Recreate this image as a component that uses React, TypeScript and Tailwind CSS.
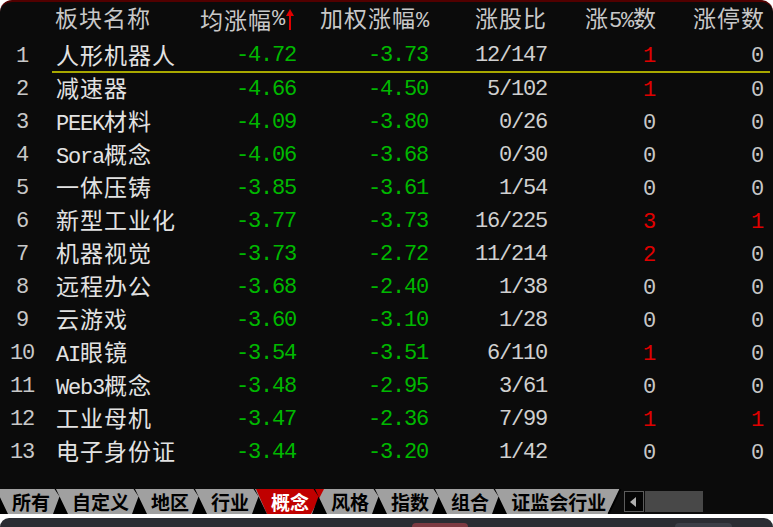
import React from "react";

type Row = {
  idx: number;
  name: string;
  avg: string;
  weighted: string;
  ratio: string;
  up5: number;
  limit: number;
};

const rows: Row[] = [
  { idx: 1, name: "人形机器人", avg: "-4.72", weighted: "-3.73", ratio: "12/147", up5: 1, limit: 0 },
  { idx: 2, name: "减速器", avg: "-4.66", weighted: "-4.50", ratio: "5/102", up5: 1, limit: 0 },
  { idx: 3, name: "PEEK材料", avg: "-4.09", weighted: "-3.80", ratio: "0/26", up5: 0, limit: 0 },
  { idx: 4, name: "Sora概念", avg: "-4.06", weighted: "-3.68", ratio: "0/30", up5: 0, limit: 0 },
  { idx: 5, name: "一体压铸", avg: "-3.85", weighted: "-3.61", ratio: "1/54", up5: 0, limit: 0 },
  { idx: 6, name: "新型工业化", avg: "-3.77", weighted: "-3.73", ratio: "16/225", up5: 3, limit: 1 },
  { idx: 7, name: "机器视觉", avg: "-3.73", weighted: "-2.72", ratio: "11/214", up5: 2, limit: 0 },
  { idx: 8, name: "远程办公", avg: "-3.68", weighted: "-2.40", ratio: "1/38", up5: 0, limit: 0 },
  { idx: 9, name: "云游戏", avg: "-3.60", weighted: "-3.10", ratio: "1/28", up5: 0, limit: 0 },
  { idx: 10, name: "AI眼镜", avg: "-3.54", weighted: "-3.51", ratio: "6/110", up5: 1, limit: 0 },
  { idx: 11, name: "Web3概念", avg: "-3.48", weighted: "-2.95", ratio: "3/61", up5: 0, limit: 0 },
  { idx: 12, name: "工业母机", avg: "-3.47", weighted: "-2.36", ratio: "7/99", up5: 1, limit: 1 },
  { idx: 13, name: "电子身份证", avg: "-3.44", weighted: "-3.20", ratio: "1/42", up5: 0, limit: 0 },
];

const tabs = ["所有", "自定义", "地区", "行业", "概念", "风格", "指数", "组合", "证监会行业"];

const cjk = "font-['Noto_Sans_CJK_SC',sans-serif] text-[23px] tracking-[1px] leading-none";
const mono = "font-['Liberation_Mono',monospace] text-[22px] tracking-[-1.2px] leading-none";

// half-width latin in 12px cells, CJK in 24px cells
const Mixed = ({ text }: { text: string }) => {
  const parts = text.match(/[\x00-\x7F]+|[^\x00-\x7F]+/g) ?? [];
  return (
    <>
      {parts.map((p, i) => (
        <span key={i} className={/^[\x00-\x7F]/.test(p) ? mono : cjk}>
          {p}
        </span>
      ))}
    </>
  );
};

const Sep = ({ first }: { first?: boolean }) => (
  <svg width="22" height="25" viewBox="0 0 22 25" className={first ? "ml-[-10px] shrink-0" : "shrink-0"}>
    <polygon points="4.5,0 6,0 18,25 3,25 9.5,7.5" fill="#000" />
  </svg>
);

const Count = ({ n }: { n: number }) => (
  <span className={`${mono} ${n > 0 ? "text-[#e00000]" : "text-[#c8c8c8]"}`}>{n}</span>
);

export default function App() {
  return (
    <div className="w-[773px] h-[527px] bg-white overflow-hidden select-none">
      <div className="h-[514px] rounded-t-[12px] bg-[#0b0b0b] border-t-2 border-[#520000] flex flex-col">
        {/* header */}
        <div className="flex h-[38px] items-center pb-[3px] text-[#c8c8c8]">
          <div className="w-[44px]" />
          <div className="ml-[8px] flex flex-1 mr-[3px] items-center">
            <div className="w-[148px] pl-[3px]">
              <Mixed text="板块名称" />
            </div>
            <div className="w-[96px] flex justify-end items-center">
              <Mixed text="均涨幅%" />
              <svg width="12" height="21" viewBox="0 0 12 21">
                <polygon points="2,7 6,0 10,7" fill="#e00000" />
                <rect x="5" y="6" width="2" height="15" fill="#e00000" />
              </svg>
            </div>
            <div className="w-[132px] text-right">
              <Mixed text="加权涨幅%" />
            </div>
            <div className="w-[119px] text-right">
              <Mixed text="涨股比" />
            </div>
            <div className="w-[110px] text-right">
              <Mixed text="涨5%数" />
            </div>
            <div className="w-[108px] text-right">
              <Mixed text="涨停数" />
            </div>
          </div>
        </div>

        {/* rows */}
        {rows.map((r) => (
          <div key={r.idx} className="flex h-[33px] items-center">
            <div className={`w-[44px] text-center text-[#c8c8c8] ${mono}`}>{r.idx}</div>
            <div
              className={`ml-[8px] mr-[3px] flex flex-1 h-full items-center box-border ${
                r.idx === 1 ? "border-b-2 border-[#a8a800] pt-[1px]" : ""
              }`}
            >
              <div className="w-[148px] pl-[4px] text-[#e2e2e2] whitespace-nowrap">
                <Mixed text={r.name} />
              </div>
              <div className={`w-[96px] text-right text-[#00b800] ${mono}`}>{r.avg}</div>
              <div className={`w-[132px] text-right text-[#00b800] ${mono}`}>{r.weighted}</div>
              <div className={`w-[119px] text-right text-[#d0d0d0] ${mono}`}>{r.ratio}</div>
              <div className="w-[110px] text-right pr-[2px]">
                <Count n={r.up5} />
              </div>
              <div className="w-[108px] text-right pr-[2px]">
                <Count n={r.limit} />
              </div>
            </div>
          </div>
        ))}

        {/* sheet tabs */}
        <div className="mt-auto flex h-[25px] items-stretch">
          <div className="relative isolate flex items-center bg-[#a0a0a0] overflow-hidden">
            {tabs.map((t, i) => {
              const active = t === "概念";
              return (
                <React.Fragment key={t}>
                  <Sep first={i === 0} />
                  <span
                    className={`relative font-['Noto_Sans_CJK_SC',sans-serif] font-bold text-[19px] leading-none ${
                      active ? "text-white" : "text-black"
                    }`}
                  >
                    {active && (
                      <svg
                        width="68"
                        height="25"
                        viewBox="0 0 68 25"
                        className="absolute left-[-15px] top-[-3px] -z-10"
                      >
                        <polygon points="0,0 68,0 55,25 11,25" fill="#c00000" />
                      </svg>
                    )}
                    {t}
                  </span>
                </React.Fragment>
              );
            })}
          </div>
          <svg width="16" height="25" viewBox="0 0 16 25" className="shrink-0">
            <polygon points="0,0 14,0 2,25 0,25" fill="#a0a0a0" />
            <line x1="14.5" y1="0" x2="2.5" y2="25" stroke="#000" strokeWidth="2" />
          </svg>
          <div className="ml-[2px] self-center flex h-[21px] w-[20px] items-center justify-center border border-[#5c5c5c] bg-[#050505]">
            <svg width="8" height="10" viewBox="0 0 8 10" className="mr-[3px]">
              <polygon points="7,0 7,10 1,5" fill="#b0b0b0" />
            </svg>
          </div>
          <div className="ml-[1px] self-center h-[21px] w-[58px] bg-[#484848]" />
        </div>
      </div>

      {/* window below */}
      <div className="mt-[4px] h-[9px] rounded-t-[10px] bg-[#2b2d33] flex items-end">
        <div className="ml-[412px] h-[4px] w-[56px] rounded-t-[6px] bg-[#7e3a42]" />
        <div className="ml-[207px] h-[4px] w-[57px] rounded-t-[6px] bg-[#3c3f47]" />
      </div>
    </div>
  );
}
